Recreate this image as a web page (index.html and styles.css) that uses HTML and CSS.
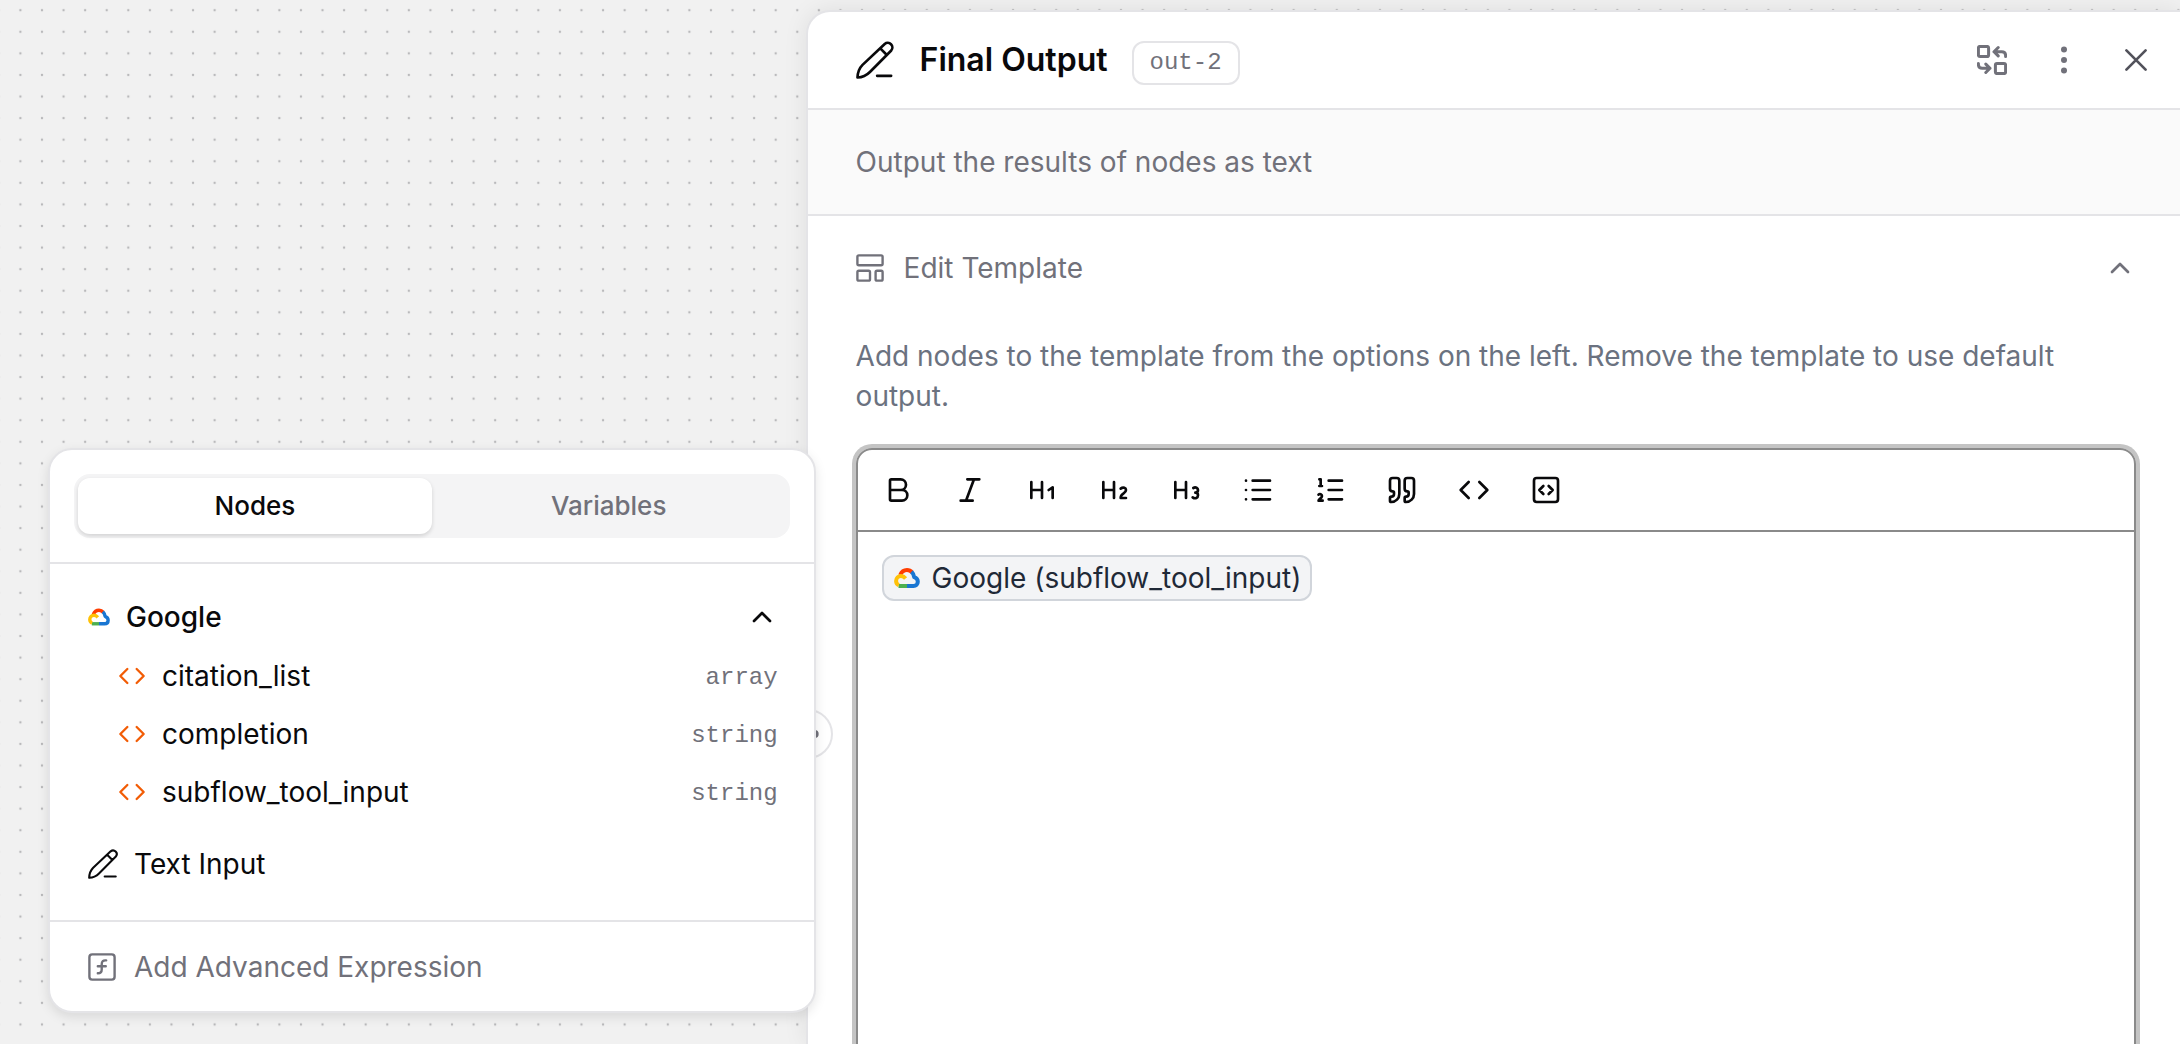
FILE: index.html
```
<!DOCTYPE html>
<html lang="en">

<head>
    <meta charset="UTF-8">
    <meta name="viewport" content="width=device-width, initial-scale=1.0">
    <title>Final Output</title>
    <link rel="stylesheet" href="styles.css">
</head>

<body>
    <!-- shared icons -->
    <svg class="sprite" aria-hidden="true">
        <symbol id="pencil" viewBox="0 0 36 36">
            <path d="M27.2 2.8a4.4 4.4 0 0 1 6.2 6.2L13.2 29.4c-3.2 3.2-6.8 5-11.8 5.2.2-5 1.6-8.8 4.8-12zM23 7l6 6M20 33h13.3" />
        </symbol>
        <symbol id="cloud" viewBox="0 0 26 20">
            <path stroke="#ff3d00" d="M6.2 7C7.5 3.8 10 2 13 2c2 0 3.8.9 5.2 2.6" />
            <path stroke="#1976d2" d="M17.5 3.8c1.6 1.5 2.4 3.2 2.7 5.4 2.3.8 3.6 2.4 3.6 4.6 0 2.6-1.8 4.2-4.3 4.2H13" />
            <path stroke="#4caf50" d="M4.5 18H13" />
            <path stroke="#ffc107" d="M4.8 17.2C3 16.4 2.1 15 2.1 13c0-3 2.2-5 4.9-5 1.9 0 3.3.8 4.6 2.4" />
        </symbol>
        <symbol id="code" viewBox="0 0 24 24">
            <path d="m16 18 6-6-6-6M8 6l-6 6 6 6" />
        </symbol>
        <symbol id="chevron-up" viewBox="0 0 24 24">
            <path d="m18 15-6-6-6 6" />
        </symbol>
    </svg>

    <div class="app">
        <svg class="dots" aria-hidden="true">
            <pattern id="dot" x="9.6" y="-0.6" width="21.58" height="21.58" patternUnits="userSpaceOnUse">
                <circle cx="10.8" cy="10.8" r="1.2" fill="#b9b9bb" />
            </pattern>
            <rect width="100%" height="100%" fill="url(#dot)" />
        </svg>

        <div class="canvas">
            <div class="picker">
                <div class="picker-head">
                    <div class="tabs" role="tablist">
                        <button class="tab active" role="tab" aria-selected="true">Nodes</button>
                        <button class="tab" role="tab" aria-selected="false">Variables</button>
                    </div>
                </div>
                <div class="picker-body">
                    <button class="row group">
                        <svg class="icon cloud"><use href="#cloud" /></svg>
                        <span class="name">Google</span>
                        <svg class="icon chevron"><use href="#chevron-up" /></svg>
                    </button>
                    <button class="row field">
                        <svg class="icon code"><use href="#code" /></svg>
                        <span class="name">citation_list</span>
                        <span class="type">array</span>
                    </button>
                    <button class="row field">
                        <svg class="icon code"><use href="#code" /></svg>
                        <span class="name">completion</span>
                        <span class="type">string</span>
                    </button>
                    <button class="row field">
                        <svg class="icon code"><use href="#code" /></svg>
                        <span class="name">subflow_tool_input</span>
                        <span class="type">string</span>
                    </button>
                    <button class="row input">
                        <svg class="icon pencil"><use href="#pencil" /></svg>
                        <span class="name">Text Input</span>
                    </button>
                </div>
                <button class="picker-foot">
                    <svg class="icon boxed" viewBox="2 2 20 20">
                        <rect x="3" y="3" width="18" height="18" rx="2" />
                        <path d="M9 16.5c2 0 2.8-1 2.8-2.8V10c0-1.9 1-3 3.2-2.7M9 11.5h5.7" />
                    </svg>
                    <span>Add Advanced Expression</span>
                </button>
            </div>
        </div>

        <div class="panel">
            <button class="handle" aria-label="Resize panel">
                <svg class="icon handle-icon" viewBox="0 0 24 24">
                    <circle cx="7" cy="12" r="1" />
                    <circle cx="17" cy="12" r="1" />
                </svg>
            </button>

            <header class="panel-head">
                <svg class="icon title-icon"><use href="#pencil" /></svg>
                <h1>Final Output</h1>
                <span class="badge">out-2</span>
                <div class="actions">
                    <button class="action" aria-label="Replace node">
                        <svg class="icon replace" viewBox="0 0 30 30">
                            <rect x="1.4" y="1.4" width="10.2" height="10.2" rx="1.6" />
                            <rect x="18.4" y="18.4" width="10.2" height="10.2" rx="1.6" />
                            <path d="M28.6 11.5v-1c0-2.3-1.5-3.8-3.8-3.8H17M21.2 2.5 17 6.7l4.2 4.2M1.4 18.5v1c0 2.3 1.5 3.8 3.8 3.8H13M8.8 19.1l4.2 4.2-4.2 4.2" />
                        </svg>
                    </button>
                    <button class="action" aria-label="More">
                        <svg class="icon more" viewBox="0 0 32 32">
                            <circle cx="16" cy="5.5" r="3" />
                            <circle cx="16" cy="16" r="3" />
                            <circle cx="16" cy="26.5" r="3" />
                        </svg>
                    </button>
                    <button class="action close" aria-label="Close">
                        <svg class="icon" viewBox="0 0 24 24">
                            <path d="M4.8 4.8l14.4 14.4M19.2 4.8L4.8 19.2" />
                        </svg>
                    </button>
                </div>
            </header>

            <p class="summary">Output the results of nodes as text</p>

            <section class="template">
                <button class="template-head">
                    <svg class="icon boxed" viewBox="2 2 20 20">
                        <rect x="3" y="3" width="18" height="7" rx="1" />
                        <rect x="3" y="14" width="9" height="7" rx="1" />
                        <rect x="16" y="14" width="5" height="7" rx="1" />
                    </svg>
                    <span class="name">Edit Template</span>
                    <svg class="icon chevron"><use href="#chevron-up" /></svg>
                </button>
                <p class="hint">Add nodes to the template from the options on the left. Remove the template to use default output.</p>

                <div class="editor">
                    <div class="toolbar">
                        <button aria-label="Bold">
                            <svg class="icon" viewBox="0 0 24 24"><path d="M6 12h9a4 4 0 0 1 0 8H7a1 1 0 0 1-1-1V5a1 1 0 0 1 1-1h7a4 4 0 0 1 0 8" /></svg>
                        </button>
                        <button aria-label="Italic">
                            <svg class="icon" viewBox="0 0 24 24"><path d="M19 4h-9M14 20H5M15 4 9 20" /></svg>
                        </button>
                        <button aria-label="Heading 1">
                            <svg class="icon" viewBox="0 0 24 24"><path d="M4 12h8M4 18V6M12 18V6m5 6 3-2v8" /></svg>
                        </button>
                        <button aria-label="Heading 2">
                            <svg class="icon" viewBox="0 0 24 24"><path d="M4 12h8M4 18V6M12 18V6M21 18h-4c0-4 4-3 4-6 0-1.5-2-2.5-4-1" /></svg>
                        </button>
                        <button aria-label="Heading 3">
                            <svg class="icon" viewBox="0 0 24 24"><path d="M4 12h8M4 18V6M12 18V6M17.5 10.5c1.7-1 3.5 0 3.5 1.5a2 2 0 0 1-2 2M17 17.5c2 1.5 4 .3 4-1.5a2 2 0 0 0-2-2" /></svg>
                        </button>
                        <button aria-label="Bullet list">
                            <svg class="icon" viewBox="0 0 24 24"><path d="M8 5h13M8 12h13M8 19h13M3 5h.01M3 12h.01M3 19h.01" /></svg>
                        </button>
                        <button aria-label="Numbered list">
                            <svg class="icon" viewBox="0 0 24 24"><path d="M11 5h10M11 12h10M11 19h10M4 4h1v5M4 9h2M6.5 20H3.4c0-1 2.6-1.9 2.6-3.5a1.5 1.5 0 0 0-2.6-1" /></svg>
                        </button>
                        <button aria-label="Quote">
                            <svg class="icon" viewBox="0 0 24 24"><path d="M16 3a2 2 0 0 0-2 2v6a2 2 0 0 0 2 2 1 1 0 0 1 1 1v1a2 2 0 0 1-2 2 1 1 0 0 0-1 1v2a1 1 0 0 0 1 1 6 6 0 0 0 6-6V5a2 2 0 0 0-2-2zM5 3a2 2 0 0 0-2 2v6a2 2 0 0 0 2 2 1 1 0 0 1 1 1v1a2 2 0 0 1-2 2 1 1 0 0 0-1 1v2a1 1 0 0 0 1 1 6 6 0 0 0 6-6V5a2 2 0 0 0-2-2z" /></svg>
                        </button>
                        <button aria-label="Code">
                            <svg class="icon"><use href="#code" /></svg>
                        </button>
                        <button aria-label="Code block">
                            <svg class="icon" viewBox="0 0 24 24"><rect x="3" y="3" width="18" height="18" rx="2" /><path d="m10 9-3 3 3 3M14 15l3-3-3-3" /></svg>
                        </button>
                    </div>
                    <div class="content" contenteditable="true" role="textbox" aria-label="Template">
                        <span class="chip" contenteditable="false"><svg class="icon cloud"><use href="#cloud" /></svg>Google (subflow_tool_input)</span>
                    </div>
                </div>
            </section>
        </div>
    </div>
</body>

</html>
```
FILE: styles.css
```
* {
    box-sizing: border-box;
}

body {
    margin: 0;
    font-family: Inter, "Liberation Sans", sans-serif;
    font-size: 28px;
    line-height: 40px;
    color: #09090b;
    background-color: #f1f1f1;
    overflow: hidden;
}

button {
    font: inherit;
    color: inherit;
    background: none;
    border: none;
    padding: 0;
    cursor: pointer;
}

p,
h1 {
    margin: 0;
}

.sprite {
    position: absolute;
    width: 0;
    height: 0;
}

.icon {
    display: block;
    flex: none;
    width: 32px;
    height: 32px;
    fill: none;
    stroke: currentColor;
    stroke-width: 2;
    stroke-linecap: round;
    stroke-linejoin: round;
}

.app {
    position: relative;
    display: flex;
    height: 100vh;
}

.dots {
    position: absolute;
    top: 0;
    left: 0;
    width: 100%;
    height: 100%;
}

.canvas {
    position: relative;
    z-index: 1;
    flex: 0 0 calc(37% - 1px);
}

/* node picker, floats over the canvas and the panel edge */
.picker {
    position: absolute;
    top: 448px;
    left: 48px;
    right: -10px;
    background-color: white;
    border: 2px solid #e4e4e7;
    border-radius: 24px;
    box-shadow: 0 4px 12px rgba(0, 0, 0, 0.1);
}

.picker-head {
    padding: 24px;
    border-bottom: 2px solid #e4e4e7;
}

.tabs {
    display: flex;
    height: 64px;
    padding: 4px;
    background-color: #f4f4f5;
    border-radius: 16px;
}

.tab {
    flex: 1;
    font-size: 26px;
    font-weight: 500;
    color: #71717a;
    border-radius: 12px;
}

.tab.active {
    color: #09090b;
    background-color: white;
    box-shadow: 0 2px 4px rgba(0, 0, 0, 0.14);
}

.picker-body {
    display: flex;
    flex-direction: column;
    padding: 22px 36px 27px 38px;
    border-bottom: 2px solid #e4e4e7;
}

.row {
    display: flex;
    align-items: center;
    gap: 16px;
    height: 58px;
    text-align: left;
}

.name {
    flex: 1;
}

.group {
    height: 61px;
    font-weight: 500;
}

.group .cloud {
    width: 22px;
    height: 18px;
}

.cloud {
    stroke-width: 4;
    stroke-linecap: butt;
}

.field {
    padding-left: 30px;
}

.row .code {
    width: 28px;
    height: 28px;
    color: #f25c05;
}

.row .pencil {
    width: 30px;
    height: 30px;
}

.pencil,
.title-icon {
    stroke-width: 2.5;
}

.type,
.badge {
    font-family: "Liberation Mono", monospace;
    font-size: 24px;
    color: #71717a;
}

.type {
    padding-top: 4px;
}

.input {
    margin-top: 14px;
}

.boxed {
    width: 28px;
    height: 28px;
    stroke-width: 1.7;
}

.picker-foot {
    display: flex;
    align-items: center;
    gap: 18px;
    width: 100%;
    height: 89px;
    padding: 0 38px;
    color: #71717a;
}

/* node settings */
.panel {
    position: relative;
    flex: 1;
    display: flex;
    flex-direction: column;
    margin-top: 10px;
    background-color: white;
    border: 2px solid #e4e4e7;
    border-width: 2px 0 0 2px;
    border-top-left-radius: 24px;
    box-shadow: 0 0 24px rgba(0, 0, 0, 0.08);
}

.handle {
    position: absolute;
    top: 697px;
    left: -25px;
    display: grid;
    place-items: center;
    width: 50px;
    height: 50px;
    color: #71717a;
    background-color: white;
    border: 2px solid #e4e4e7;
    border-radius: 50%;
}

.handle-icon {
    stroke-width: 4;
}

.panel-head {
    display: flex;
    flex: none;
    align-items: center;
    height: 98px;
    padding: 0 20px 0 48px;
    border-bottom: 2px solid #e4e4e7;
}

.title-icon {
    width: 38px;
    height: 38px;
}

h1 {
    margin-left: 26px;
    font-size: 32px;
    font-weight: 600;
}

.badge {
    margin-top: 6px;
    margin-left: 24px;
    padding: 0 16px;
    line-height: 40px;
    border: 2px solid #e4e4e7;
    border-radius: 12px;
}

.actions {
    display: flex;
    gap: 24px;
    margin-left: auto;
    color: #71717a;
}

.action {
    display: grid;
    place-items: center;
    width: 48px;
    height: 48px;
}

.replace {
    width: 30px;
    height: 30px;
    stroke-width: 3;
}

.more {
    fill: currentColor;
    stroke: none;
}

.close {
    color: #52525b;
}

.summary {
    flex: none;
    padding: 32px 48px;
    color: #71717a;
    background-color: #fafafa;
    border-bottom: 2px solid #e4e4e7;
}

.template {
    padding: 32px 44px 0 48px;
}

.template-head {
    display: flex;
    align-items: center;
    gap: 20px;
    width: 100%;
    height: 40px;
    text-align: left;
    color: #71717a;
}

.hint {
    margin-top: 48px;
    color: #6b7280;
}

.editor {
    min-height: 640px;
    margin-top: 32px;
    border: 2px solid #8a8a8a;
    border-radius: 16px;
    box-shadow: 0 0 0 4px #c4c4c4;
}

.toolbar {
    display: flex;
    gap: 24px;
    padding: 16px;
    border-bottom: 2px solid #8a8a8a;
}

.toolbar button {
    display: grid;
    place-items: center;
    width: 48px;
    height: 48px;
}

.content {
    padding: 23px 24px;
    outline: none;
}

.chip {
    display: inline-flex;
    align-items: center;
    gap: 12px;
    height: 46px;
    padding: 0 9px 0 10px;
    color: #1f2937;
    background-color: #f3f4f6;
    border: 2px solid #d1d5db;
    border-radius: 12px;
}

.chip .cloud {
    width: 26px;
    height: 20px;
}
```
